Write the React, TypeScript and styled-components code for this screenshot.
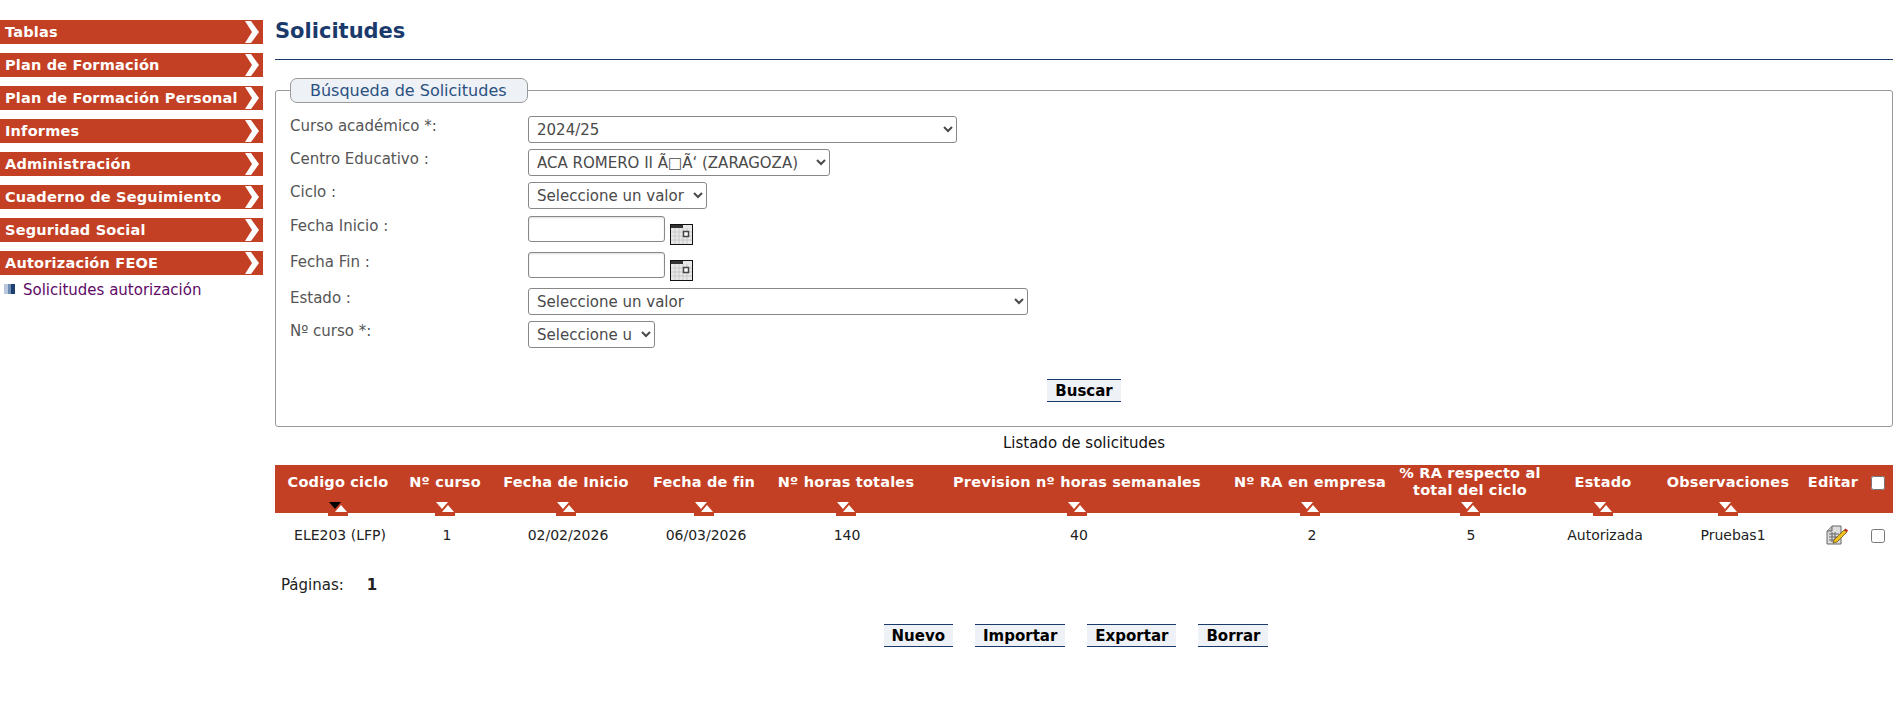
import React from 'react';
import styled, { createGlobalStyle } from 'styled-components';

const GlobalStyle = createGlobalStyle`
  html, body {
    margin: 0;
    padding: 0;
    background: #fff;
    font-family: 'DejaVu Sans', Verdana, sans-serif;
    font-size: 13px;
  }
`;

const Page = styled.div`
  display: flex;
  align-items: flex-start;
  width: 1899px;
  height: 703px;
  overflow: hidden;
`;

const Sidebar = styled.nav`
  width: 263px;
  flex: none;
  padding-top: 20px;
  display: flex;
  flex-direction: column;
  gap: 9px;
`;

const MenuItem = styled.div`
  height: 24px;
  background: #c44024;
  color: #fff;
  font-weight: bold;
  font-size: 14.5px;
  letter-spacing: 0.2px;
  display: flex;
  align-items: center;
  justify-content: space-between;
  padding: 0 4px 0 5px;
  white-space: nowrap;
`;

const SubLink = styled.a`
  display: flex;
  align-items: center;
  gap: 8px;
  margin: -4px 0 0 4px;
  height: 20px;
  color: #5e0a66;
  font-size: 15px;
`;

const Bullet = styled.span`
  width: 11px;
  height: 10px;
  margin-bottom: 3px;
  background: linear-gradient(90deg, #b9c8dd 0 35%, #6f8cb4 35% 60%, #1f3f70 60% 100%);
`;

const Main = styled.main`
  margin-left: 12px;
  width: 1618px;
  flex: none;
`;

const Title = styled.h1`
  margin: 0;
  padding-top: 18px;
  height: 41px;
  font-size: 21px;
  line-height: 26px;
  color: #1a3a6b;
  font-weight: bold;
  border-bottom: 1px solid #1a3a6b;
`;

const SearchBox = styled.fieldset`
  margin: 18px 0 0;
  padding: 13px 14px 0;
  height: 349px;
  box-sizing: border-box;
  border: 1px solid #999;
  border-radius: 3px;
  min-inline-size: 0;
`;

const SearchLegend = styled.legend`
  margin-left: 0;
  padding: 0 19px;
  height: 25px;
  box-sizing: border-box;
  width: 238px;
  border: 1px solid #999;
  border-radius: 7px;
  background: #eef1f6;
  color: #2a5080;
  font-size: 16px;
  line-height: 23px;
  white-space: nowrap;
`;

const FormRow = styled.div<{ $height: number }>`
  display: grid;
  grid-template-columns: 238px 1fr;
  height: ${(p) => p.$height}px;
`;

const FieldLabel = styled.label`
  color: #555;
  font-size: 15px;
  line-height: 20px;
`;

const FieldControl = styled.div`
  display: flex;
  align-items: flex-start;
`;

const Select = styled.select<{ $width: number }>`
  width: ${(p) => p.$width}px;
  height: 27px;
  box-sizing: border-box;
  border: 1px solid #888;
  border-radius: 3px;
  background: #fff;
  color: #4a4a4a;
  font-family: inherit;
  font-size: 15px;
  padding: 0 4px;
`;

const DateInput = styled.input`
  width: 137px;
  height: 26px;
  box-sizing: border-box;
  border: 1px solid #888;
  border-radius: 3px;
  box-shadow: inset 0 1px 2px #ddd;
`;

const CalendarIcon = styled.svg`
  margin: 8px 0 0 5px;
`;

const SubmitRow = styled.div<{ $gap?: number; $top: number; $inset?: number }>`
  display: flex;
  justify-content: center;
  gap: ${(p) => p.$gap ?? 0}px;
  margin-top: ${(p) => p.$top}px;
  padding-right: ${(p) => p.$inset ?? 0}px;
`;

const ActionButton = styled.button`
  height: 23px;
  box-sizing: border-box;
  padding: 1px 8px 0;
  background: #eef1f6;
  border: 0;
  border-top: 1px solid #1a3a6b;
  border-bottom: 1px solid #1a3a6b;
  color: #000;
  font-family: inherit;
  font-weight: bold;
  font-size: 15px;
`;

const ListCaption = styled.div`
  text-align: center;
  color: #111;
  font-size: 15px;
  height: 38px;
  line-height: 33px;
`;

const Table = styled.table`
  border-collapse: collapse;
  table-layout: fixed;
  width: 1618px;
`;

const HeadCell = styled.th<{ $shift?: number }>`
  position: relative;
  height: 48px;
  padding: 0 0 14px ${(p) => p.$shift ?? 0}px;
  box-sizing: border-box;
  background: #c44024;
  color: #fff;
  font-size: 14.5px;
  letter-spacing: 0.2px;
  line-height: 17px;
  font-weight: bold;
  vertical-align: middle;
  text-align: center;
`;

const SortIcon = styled.svg`
  position: absolute;
  left: 50%;
  bottom: -3px;
  margin-left: -10px;
`;

const HeadCheck = styled.input`
  margin: 0;
  width: 14px;
  height: 14px;
  vertical-align: middle;
`;

const BodyCell = styled.td<{ $shift?: number }>`
  height: 44px;
  padding: 0 0 0 ${(p) => p.$shift ?? 4}px;
  text-align: center;
  color: #222;
  font-size: 14px;
`;

const Pager = styled.div`
  margin: 16px 0 0 6px;
  color: #222;
  font-size: 15px;
  height: 24px;
  line-height: 24px;
  display: flex;
  gap: 23px;
`;

const PagerNumber = styled.strong`
  font-weight: bold;
`;

const columns: { title: React.ReactNode; width: number; value: string; shift?: number }[] = [
  { title: 'Codigo ciclo', width: 126, value: 'ELE203 (LFP)' },
  { title: 'Nº curso', width: 88, value: '1' },
  { title: 'Fecha de Inicio', width: 154, value: '02/02/2026' },
  { title: 'Fecha de fin', width: 122, value: '06/03/2026' },
  { title: 'Nº horas totales', width: 162, value: '140', shift: 2 },
  { title: 'Prevision nº horas semanales', width: 300, value: '40' },
  { title: 'Nº RA en empresa', width: 166, value: '2' },
  { title: <>% RA respecto al<br />total del ciclo</>, width: 154, value: '5', shift: 2 },
  { title: 'Estado', width: 112, value: 'Autorizada' },
  { title: 'Observaciones', width: 138, value: 'Pruebas1', shift: 10 },
];

const menu = [
  'Tablas',
  'Plan de Formación',
  'Plan de Formación Personal',
  'Informes',
  'Administración',
  'Cuaderno de Seguimiento',
  'Seguridad Social',
  'Autorización FEOE',
];

const Chevron = () => (
  <svg width="14" height="24" viewBox="0 0 14 24" style={{ flex: 'none' }}>
    <path d="M0 1h6l8 11-8 11H0l7-11z" fill="#fff" />
  </svg>
);

const Calendar = () => (
  <CalendarIcon width="23" height="21" viewBox="0 0 23 21">
    <rect x="0.500" y="0.500" width="22" height="20" fill="#e8e8e8" stroke="#111" />
    <rect x="1" y="1" width="12" height="3" fill="#333" />
    <path d="M1 8h21M1 12h21M1 16h21M5 4v16M9 4v16M13 4v16M17 4v16" stroke="#c8c8c8" />
    <rect x="13.500" y="7.500" width="5" height="5" fill="#fff" stroke="#444" strokeWidth="1.500" />
  </CalendarIcon>
);

const Sort = ({ active }: { active?: boolean }) => (
  <SortIcon width="20" height="15" viewBox="0 0 20 15">
    <rect width="20" height="15" fill="#c44024" />
    <path d="M1 1h12l-6 7z" fill={active ? '#000' : '#fff'} />
    <path d="M13 4l6 7H7z" fill="#fff" />
  </SortIcon>
);

const EditIcon = () => (
  <svg width="22" height="20" viewBox="0 0 22 20" style={{ verticalAlign: 'middle' }}>
    <path d="M6 1h9v18H1V6z" fill="#ddd" stroke="#666" />
    <path d="M1 6h5V1" fill="#bbb" stroke="#666" />
    <path d="M3 9h10M3 12h10M3 15h10M6 7v10M9 7v10" stroke="#666" />
    <path d="M8 15l10-10 3 2-10 10-4 1z" fill="#f0c020" stroke="#5a4208" strokeWidth="0.700" />
    <path d="M18 5l1.500-1.500 2.500 2L21 7z" fill="#c02020" />
  </svg>
);

export default function App() {
  return (
    <Page>
      <GlobalStyle />
      <Sidebar>
        {menu.map((item) => (
          <MenuItem key={item}>
            {item}
            <Chevron />
          </MenuItem>
        ))}
        <SubLink>
          <Bullet />
          Solicitudes autorización
        </SubLink>
      </Sidebar>
      <Main>
        <Title>Solicitudes</Title>
        <SearchBox>
          <SearchLegend>Búsqueda de Solicitudes</SearchLegend>
          <FormRow $height={33}>
            <FieldLabel>Curso académico *:</FieldLabel>
            <FieldControl>
              <Select $width={429}><option>2024/25</option></Select>
            </FieldControl>
          </FormRow>
          <FormRow $height={33}>
            <FieldLabel>Centro Educativo :</FieldLabel>
            <FieldControl>
              <Select $width={302}><option>ACA ROMERO II Ã□Ã‘ (ZARAGOZA)</option></Select>
            </FieldControl>
          </FormRow>
          <FormRow $height={34}>
            <FieldLabel>Ciclo :</FieldLabel>
            <FieldControl>
              <Select $width={179}><option>Seleccione un valor</option></Select>
            </FieldControl>
          </FormRow>
          <FormRow $height={36}>
            <FieldLabel>Fecha Inicio :</FieldLabel>
            <FieldControl>
              <DateInput />
              <Calendar />
            </FieldControl>
          </FormRow>
          <FormRow $height={36}>
            <FieldLabel>Fecha Fin :</FieldLabel>
            <FieldControl>
              <DateInput />
              <Calendar />
            </FieldControl>
          </FormRow>
          <FormRow $height={33}>
            <FieldLabel>Estado :</FieldLabel>
            <FieldControl>
              <Select $width={500}><option>Seleccione un valor</option></Select>
            </FieldControl>
          </FormRow>
          <FormRow $height={27}>
            <FieldLabel>Nº curso *:</FieldLabel>
            <FieldControl>
              <Select $width={127}><option>Seleccione u</option></Select>
            </FieldControl>
          </FormRow>
          <SubmitRow $top={31}>
            <ActionButton>Buscar</ActionButton>
          </SubmitRow>
        </SearchBox>
        <ListCaption>Listado de solicitudes</ListCaption>
        <Table>
          <colgroup>
            {columns.map((c, i) => (
              <col key={i} style={{ width: c.width }} />
            ))}
            <col style={{ width: 66 }} />
            <col style={{ width: 30 }} />
          </colgroup>
          <thead>
            <tr>
              {columns.map((c, i) => (
                <HeadCell key={i}>
                  {c.title}
                  <Sort active={i === 0} />
                </HeadCell>
              ))}
              <HeadCell $shift={6}>Editar</HeadCell>
              <HeadCell><HeadCheck type="checkbox" /></HeadCell>
            </tr>
          </thead>
          <tbody>
            <tr>
              {columns.map((c, i) => (
                <BodyCell key={i} $shift={c.shift}>{c.value}</BodyCell>
              ))}
              <BodyCell $shift={14}><EditIcon /></BodyCell>
              <BodyCell $shift={0}><HeadCheck type="checkbox" /></BodyCell>
            </tr>
          </tbody>
        </Table>
        <Pager>
          <span>Páginas:</span>
          <PagerNumber>1</PagerNumber>
        </Pager>
        <SubmitRow $top={27} $gap={22} $inset={16}>
          <ActionButton>Nuevo</ActionButton>
          <ActionButton>Importar</ActionButton>
          <ActionButton>Exportar</ActionButton>
          <ActionButton>Borrar</ActionButton>
        </SubmitRow>
      </Main>
    </Page>
  );
}
